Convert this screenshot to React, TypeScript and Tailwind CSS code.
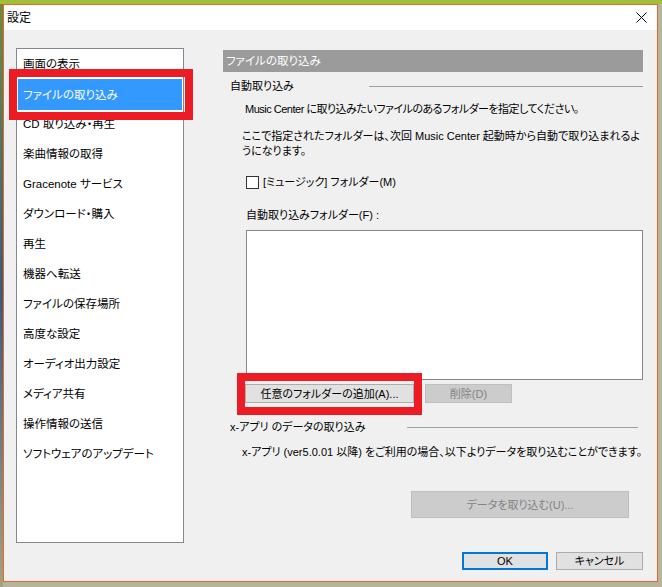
import React from "react";

const font = { fontFamily: '"Liberation Sans", "Noto Sans CJK JP", sans-serif' };

const items = [
  "画面の表示",
  "ファイルの取り込み",
  "CD 取り込み・再生",
  "楽曲情報の取得",
  "Gracenote サービス",
  "ダウンロード・購入",
  "再生",
  "機器へ転送",
  "ファイルの保存場所",
  "高度な設定",
  "オーディオ出力設定",
  "メディア共有",
  "操作情報の送信",
  "ソフトウェアのアップデート",
];

const GroupLabel = ({ label, lineClass }: { label: string; lineClass: string }) => (
  <div className="flex items-center h-[16px] pl-[7px]">
    <span className="whitespace-nowrap">{label}</span>
    <div className={lineClass} />
  </div>
);

export default function App() {
  return (
    <div
      className="relative w-[662px] h-[587px] overflow-hidden bg-[#b7b39c] text-[11.5px] leading-[16px] text-black [font-feature-settings:'palt']"
      style={font}
    >
      {/* desktop strips */}
      <div className="h-[4px] bg-[#a3bf3a]" />
      <div className="absolute left-0 top-[4px] w-[3px] h-[583px] bg-gradient-to-b from-[#6f8a3a] via-[#3b5a7a] to-[#a7a07e]" />

      {/* window */}
      <div className="absolute left-[3px] top-[4px] w-[655px] h-[578px] border border-[#e2692b] bg-[#f0f0f0] flex flex-col">
        <div className="h-[25px] bg-white flex items-center justify-between pl-[3px] pr-[10px] shrink-0">
          <span className="text-[12px]">設定</span>
          <svg width="11" height="11" viewBox="0 0 11 11">
            <path d="M0.5 0.5 L10.5 10.5 M10.5 0.5 L0.5 10.5" stroke="#000" strokeWidth="1" />
          </svg>
        </div>

        <div className="flex pl-[12px] pt-[18px]">
          {/* left list */}
          <div className="w-[168px] h-[495px] bg-white border border-[#828790] shrink-0">
            {items.map((it, i) => (
              <div
                key={it}
                className={
                  i === 1
                    ? "h-[31px] -mb-[1px] flex items-center pl-[5px] ml-[1px] mr-[1px] bg-[#3399ff] text-white whitespace-nowrap"
                    : "h-[30px] flex items-center pl-[6px] whitespace-nowrap"
                }
              >
                {it}
              </div>
            ))}
          </div>

          {/* right panel */}
          <div className="ml-[39px] mt-[2px] w-[420px] flex flex-col text-[11px]">
            <div className="h-[22px] bg-[#9b9b9b] text-white flex items-center pl-[3px] text-[11.5px]">
              ファイルの取り込み
            </div>

            <div className="mt-[6px]">
              <GroupLabel label="自動取り込み" lineClass="ml-auto w-[274px] h-px bg-[#a0a0a0]" />
            </div>

            <div className="mt-[7px] h-[16px] pl-[22px] whitespace-nowrap tracking-[-0.5px]">
              Music Center に取り込みたいファイルのあるフォルダーを指定してください。
            </div>

            <div className="mt-[12px] pl-[19px] leading-[15px] whitespace-nowrap">
              ここで指定されたフォルダーは、次回 Music Center 起動時から自動で取り込まれるよ
              <br />
              うになります。
            </div>

            <div className="mt-[15px] h-[16px] pl-[23px] flex items-center">
              <div className="w-[13px] h-[13px] bg-white border border-[#333333]" />
              <span className="ml-[4px] whitespace-nowrap">[ミュージック] フォルダー(M)</span>
            </div>

            <div className="mt-[17px] h-[16px] pl-[23px] whitespace-nowrap">自動取り込みフォルダー(F) :</div>

            <div className="mt-[7px] ml-[23px] w-[397px] h-[150px] bg-white border border-[#828790]" />

            <div className="mt-[4px] ml-[22px] flex">
              <button className="w-[169px] h-[19px] bg-[#e1e1e1] border border-[#adadad] flex items-center justify-center whitespace-nowrap">
                任意のフォルダーの追加(A)...
              </button>
              <button className="ml-[11px] w-[87px] h-[19px] bg-[#cccccc] border border-[#bfbfbf] text-[#838383] flex items-center justify-center">
                削除(D)
              </button>
            </div>

            <div className="mt-[16px]">
              <GroupLabel label="x-アプリ のデータの取り込み" lineClass="ml-auto mr-[5px] w-[231px] h-px bg-[#a0a0a0]" />
            </div>

            <div className="mt-[9px] h-[16px] pl-[19px] whitespace-nowrap">
              x-アプリ (ver5.0.01 以降) をご利用の場合、以下よりデータを取り込むことができます。
            </div>

            <button className="mt-[31px] ml-[188px] w-[218px] h-[27px] bg-[#cccccc] border border-[#bfbfbf] text-[#838383] flex items-center justify-center">
              データを取り込む(U)...
            </button>

            <div className="mt-[34px] ml-[239px] flex gap-[8px]">
              <button className="w-[86px] h-[18px] bg-[#e1e1e1] border-2 border-[#0078d7] flex items-center justify-center">
                OK
              </button>
              <button className="w-[87px] h-[18px] bg-[#e1e1e1] border border-[#adadad] flex items-center justify-center">
                キャンセル
              </button>
            </div>
          </div>
        </div>
      </div>

      {/* red annotation frames */}
      <div className="absolute left-[9px] top-[69px] w-[184px] h-[51px] border-[8px] border-[#ed1c24]" />
      <div className="absolute left-[237px] top-[373px] w-[185px] h-[42px] border-[8px] border-[#ed1c24]" />
    </div>
  );
}
